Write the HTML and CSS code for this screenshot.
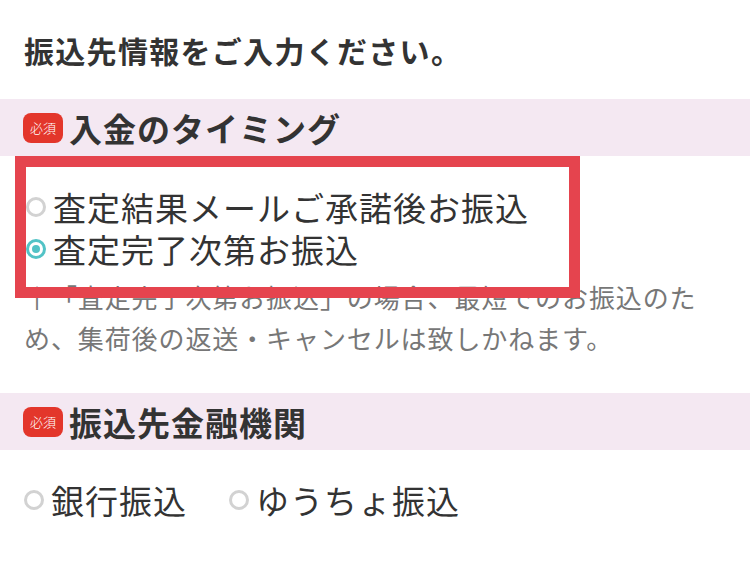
FILE: index.html
```html
<!DOCTYPE html>
<html lang="ja">
<head>
<meta charset="utf-8">
<link rel="stylesheet" href="styles.css">
</head>
<body>
<div class="page">
  <h1 class="title">振込先情報をご入力ください。</h1>
  <div class="band"><span class="badge">必須</span><span class="band-label">入金のタイミング</span></div>
  <div class="options">
    <div class="option"><span class="radio"></span><span class="opt-text">査定結果メールご承諾後お振込</span></div>
    <div class="option"><span class="radio checked"></span><span class="opt-text">査定完了次第お振込</span></div>
  </div>
  <p class="note">↑「査定完了次第お振込」の場合、最短でのお振込のため、集荷後の返送・キャンセルは致しかねます。</p>
  <div class="band band-second"><span class="badge">必須</span><span class="band-label">振込先金融機関</span></div>
  <div class="options-inline">
    <div class="option"><span class="radio"></span><span class="opt-text">銀行振込</span></div>
    <div class="option"><span class="radio"></span><span class="opt-text">ゆうちょ振込</span></div>
  </div>
  <div class="highlight"></div>
</div>
</body>
</html>
```
FILE: styles.css
```css
html, body {
  margin: 0;
  padding: 0;
  background: #ffffff;
}
body {
  font-family: "Noto Sans CJK JP", "Noto Sans", sans-serif;
  color: #333333;
}
.page {
  position: relative;
  width: 750px;
  height: 568px;
  overflow: hidden;
}
.title {
  margin: 0;
  height: 99px;
  display: flex;
  align-items: center;
  padding-left: 24px;
  font-size: 30px;
  font-weight: 700;
  letter-spacing: 1.3px;
  color: #333333;
}
.band {
  height: 57px;
  background: #f4e8f2;
  display: flex;
  align-items: center;
  padding-left: 23px;
  gap: 6px;
}
.badge {
  width: 40px;
  height: 30px;
  border-radius: 8px;
  background: #e3362b;
  color: #ffffff;
  font-size: 13px;
  font-weight: 300;
  display: flex;
  align-items: center;
  justify-content: center;
  letter-spacing: 0;
}
.band-label {
  font-size: 33px;
  font-weight: 700;
  line-height: 44px;
  letter-spacing: 1px;
  color: #333333;
}
.options {
  padding-top: 30px;
  padding-left: 26px;
}
.option {
  height: 42px;
  display: flex;
  align-items: center;
}
.radio {
  width: 20px;
  height: 20px;
  box-sizing: border-box;
  border: 3px solid #d2d2d2;
  border-radius: 50%;
  margin-right: 7px;
  flex: none;
  display: flex;
  align-items: center;
  justify-content: center;
}
.radio.checked {
  border-color: #52c3c6;
}
.radio.checked::after {
  content: "";
  width: 8px;
  height: 8px;
  border-radius: 50%;
  background: #52c3c6;
}
.opt-text {
  font-size: 33px;
  line-height: 42px;
  letter-spacing: 1px;
  color: #333333;
}
.note {
  margin: 6px 0 0;
  padding: 0 24px;
  font-size: 26px;
  line-height: 41px;
  letter-spacing: 0.9px;
  color: #777777;
}
.band-second {
  margin-top: 35px;
}
.options-inline {
  padding-top: 29px;
  padding-left: 24px;
  display: flex;
  gap: 42px;
}
.highlight {
  position: absolute;
  left: 15px;
  top: 156px;
  width: 565px;
  height: 142px;
  box-sizing: border-box;
  border: 11px solid #e5444e;
}
```
